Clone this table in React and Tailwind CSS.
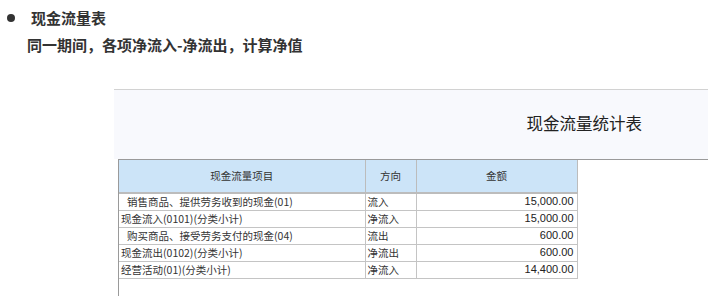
import React from "react";

const rows = [
	{ item: "  销售商品、提供劳务收到的现金(01)", dir: "流入", amount: "15,000.00", indent: true },
	{ item: "现金流入(0101)(分类小计)", dir: "净流入", amount: "15,000.00" },
	{ item: "购买商品、接受劳务支付的现金(04)", dir: "流出", amount: "600.00", indent: true },
	{ item: "现金流出(0102)(分类小计)", dir: "净流出", amount: "600.00" },
	{ item: "经营活动(01)(分类小计)", dir: "净流入", amount: "14,400.00" },
];

export default function App() {
	return (
		<div className="w-[720px] h-[296px] overflow-hidden bg-white text-[#333] font-['Noto_Sans_CJK_SC',sans-serif]">
			<div className="pt-[7px] pl-[7px]">
				<div className="flex items-center h-[22px]">
					<span className="w-[8px] h-[8px] rounded-full bg-[#333]" />
					<span className="ml-[16px] text-[15px] font-bold leading-[22px]">现金流量表</span>
				</div>
				<div className="mt-[5px] pl-[20px] text-[15px] font-bold leading-[22px]">同一期间，各项净流入-净流出，计算净值</div>
			</div>

			<div className="mt-[33px] ml-[114px] w-[594px]">
				<div className="h-[70px] border-t border-[#d2d2d2] bg-[#f8f9fd] flex items-center justify-end pr-[66px] pb-[3px] text-[16.5px] text-[#222]">现金流量统计表</div>
				<div className="ml-[4px] h-[140px] border-t border-l border-[#9a9a9a]">
					<table className="table-fixed border-collapse text-[10.5px] font-['Noto_Sans_CJK_SC',sans-serif]">
						<colgroup>
							<col className="w-[246px]" />
							<col className="w-[51px]" />
							<col className="w-[161px]" />
						</colgroup>
						<thead>
							<tr className="h-[33px] bg-[#cce4f8]">
								<th className="font-normal border-r border-b-2 border-[#bcbcbc]">现金流量项目</th>
								<th className="font-normal border-r border-b-2 border-[#bcbcbc]">方向</th>
								<th className="font-normal border-r border-b-2 border-[#bcbcbc]">金额</th>
							</tr>
						</thead>
						<tbody>
							{rows.map((r) => (
								<tr key={r.item} className="h-[17px] leading-[15px]">
									<td className={`border-r border-b border-[#c4c4c4] whitespace-pre ${r.indent ? "pl-[8px]" : "pl-[2px]"}`}>{r.item.trim()}</td>
									<td className="border-r border-b border-[#c4c4c4] pl-[2px]">{r.dir}</td>
									<td className="border-r border-b border-[#c4c4c4] pr-[3px] text-right text-[11px] text-[#222] font-['Liberation_Sans',sans-serif]">{r.amount}</td>
								</tr>
							))}
						</tbody>
					</table>
				</div>
			</div>
		</div>
	);
}
